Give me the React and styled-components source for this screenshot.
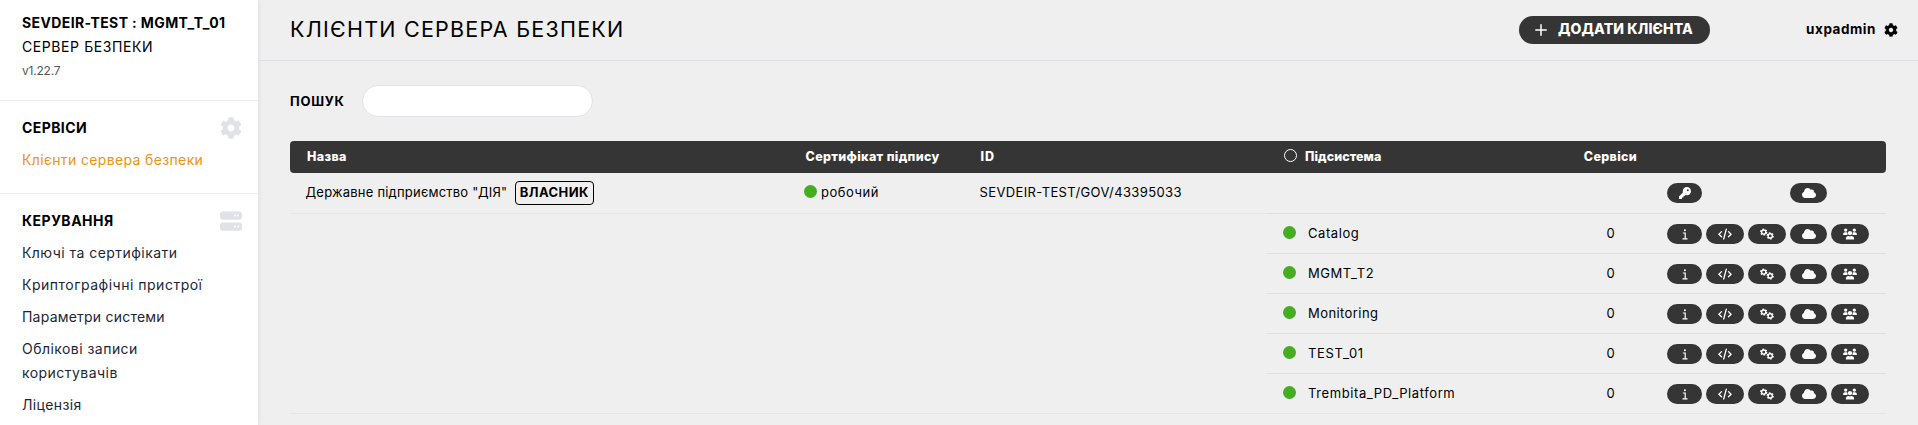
import React from 'react';
import styled, { createGlobalStyle } from 'styled-components';
import { FaCog } from 'react-icons/fa';
import { FaCloud, FaKey, FaServer } from 'react-icons/fa6';

const GlobalStyle = createGlobalStyle`
  * { box-sizing: border-box; }
  body {
    margin: 0;
    overflow: hidden;
    background: #efefef;
    color: #000;
    font-family: Inter, "Noto Sans", sans-serif;
  }
`;

const Page = styled.div`
  display: flex;
  height: 425px;
`;

const Label = styled.span`
  letter-spacing: ${(p) => p.$track || 0}px;
  white-space: nowrap;
`;

/* Sidebar */

const Sidebar = styled.aside`
  flex: none;
  width: 258px;
  background: #fff;
  box-shadow: 0 0 5px rgba(0, 0, 0, 0.1);
  overflow: hidden;
`;

const ServerInfo = styled.div`
  height: 101px;
  padding: 11px 0 0 22px;
  border-bottom: 1px solid #eeeff4;
  font-size: 14px;
  line-height: 24px;
`;

const ServerLine = styled.div`
  font-weight: ${(p) => (p.$bold ? 700 : 400)};
`;

const Version = styled.div`
  font-size: 12px;
  color: #555;
`;

const NavSection = styled.section`
  padding: 15px 16px 21px 22px;
  border-bottom: 1px solid #eeeff4;
`;

const NavHeading = styled.div`
  display: flex;
  align-items: center;
  justify-content: space-between;
  height: 24px;
  font-size: 14px;
  font-weight: 700;
  line-height: 24px;
  svg { color: #e1e2e8; }
`;

const NavItem = styled.div`
  margin-top: 8px;
  font-size: 14px;
  line-height: 24px;
  color: ${(p) => (p.$active ? '#f0930f' : '#1d2636')};
`;

/* Main area */

const Main = styled.main`
  flex: 1;
  min-width: 0;
`;

const TopBar = styled.header`
  display: flex;
  align-items: center;
  height: 61px;
  padding: 0 20px 0 32px;
  border-bottom: 1px solid #dddfe4;
`;

const Title = styled.h1`
  flex: 1;
  margin: 0 0 2px;
  font-size: 21.5px;
  font-weight: 400;
  line-height: 28px;
`;

const AddButton = styled.button`
  display: flex;
  align-items: center;
  gap: 11px;
  width: 191px;
  height: 28px;
  margin-right: 96px;
  padding: 0 0 0 16px;
  border: 0;
  border-radius: 14px;
  background: #353535;
  color: #fff;
  font: 800 14px/26px Inter, sans-serif;
  span { padding-bottom: 2px; }
`;

const User = styled.div`
  display: flex;
  align-items: center;
  gap: 8px;
  font-size: 13.5px;
  font-weight: 700;
  span { padding-bottom: 2px; }
`;

const Content = styled.div`
  padding: 24px 32px 0;
`;

const Search = styled.label`
  display: flex;
  align-items: center;
  gap: 17px;
  font-size: 13px;
  font-weight: 700;
  span { padding-bottom: 1px; }
`;

const SearchInput = styled.input`
  width: 231px;
  height: 32px;
  border: 1px solid #e1e2e8;
  border-radius: 16px;
  background: #fff;
`;

const Table = styled.div`
  width: 1596px;
  margin-top: 24px;
  font-size: 13px;
  border-bottom: 1px solid #e5e5e6;
`;

const Row = styled.div`
  display: grid;
  grid-template-columns: 499px 175px 303px 287px 113px 219px;
  align-items: center;
  height: 40px;
`;

const HeadRow = styled(Row)`
  height: 32px;
  padding-bottom: 1px;
  border-radius: 4px;
  background: #353535;
  color: #fff;
  font-size: 12.5px;
  font-weight: 800;
`;

const SubRow = styled.div`
  display: grid;
  grid-template-columns: 287px 113px 219px;
  align-items: center;
  height: 40px;
  border-top: 1px solid #e0e0e2;
`;

const SubList = styled.div`
  display: flex;
  flex-direction: column;
  width: 619px;
  margin-left: auto;
`;

const GroupRows = styled.div`
  display: flex;
`;

const Spacer = styled.div`
  flex: 1;
  border-top: 1px solid #e6e6e7;
`;

const Cell = styled.div`
  display: flex;
  align-items: center;
  gap: ${(p) => p.$gap || 0}px;
  padding-left: ${(p) => p.$inset || 0}px;
  padding-bottom: ${(p) => p.$lift || 0}px;
`;

const CountCell = styled.div`
  text-align: center;
  padding-bottom: ${(p) => p.$lift || 0}px;
`;

const ClientName = styled(Label)`
  padding-bottom: 3px;
`;

const OwnerBadge = styled.span`
  display: inline-flex;
  align-items: center;
  justify-content: center;
  width: 79px;
  height: 24px;
  padding-bottom: 2px;
  border: 1px solid #000;
  border-radius: 4px;
  font-weight: 700;
`;

const Status = styled.i`
  flex: none;
  width: 13px;
  height: 13px;
  border-radius: 50%;
  background: ${(p) => (p.$hollow ? 'transparent' : '#45ad20')};
  border: ${(p) => (p.$hollow ? '1px solid #fff' : '0')};
  margin-bottom: ${(p) => p.$raise || 0}px;
`;

const Actions = styled.div`
  display: grid;
  grid-template-columns: 35px 38px 38px 37px 38px;
  column-gap: 4px;
`;

const Pill = styled.button`
  grid-column: ${(p) => p.$col};
  display: flex;
  align-items: center;
  justify-content: center;
  height: 20px;
  padding: 0;
  border: 0;
  border-radius: 10px;
  background: #353535;
  color: #fff;
`;

/* Icons */

const PlusIcon = () => (
  <svg width="12" height="12" viewBox="0 0 12 12" stroke="currentColor" strokeWidth="1.5" strokeLinecap="round">
    <path d="M6 .8v10.400M.8 6h10.400" />
  </svg>
);

const InfoIcon = () => (
  <svg width="6" height="12" viewBox="0 0 6 12" fill="none" stroke="currentColor" strokeWidth="1.2">
    <circle cx="2.9" cy="2.2" r=".95" fill="currentColor" stroke="none" />
    <path d="M.9 5h2.300v5.800M.5 10.900h5" />
  </svg>
);

const CodeIcon = () => (
  <svg width="14" height="12" viewBox="0 0 14 12" fill="none" stroke="currentColor" strokeWidth="1.3" strokeLinecap="round">
    <path d="M3.500 3.600.9 6.200l2.600 2.600M10.500 3.600l2.600 2.600-2.600 2.600M8.300 1.200 5.700 11" />
  </svg>
);

const Gear = ({ cx, cy }) => (
  <g>
    <circle cx={cx} cy={cy} r="2.1" strokeWidth="1.4" />
    <circle cx={cx} cy={cy} r="3" strokeWidth="1.3" strokeDasharray="1.57 1.57" />
  </g>
);

const GearsIcon = () => (
  <svg width="14" height="12" viewBox="0 0 14 12" fill="none" stroke="currentColor">
    <Gear cx={3.7} cy={4.1} />
    <Gear cx={10.2} cy={7.9} />
  </svg>
);

const GroupIcon = () => (
  <svg width="14" height="12" viewBox="0 0 14 12" fill="currentColor">
    <circle cx="2.7" cy="2.1" r="1.7" />
    <circle cx="11.3" cy="2.1" r="1.7" />
    <circle cx="7" cy="5.2" r="2.1" />
    <path d="M.2 7V6c0-1 .8-1.700 1.800-1.700h1.600c.4 0 .6.100.8.300-.2.900-.1 1.700.2 2.400zM13.800 7V6c0-1-.8-1.700-1.800-1.700h-1.600c-.4 0-.6.100-.8.300.2.900.1 1.700-.2 2.400z" />
    <path d="M2.900 11.600v-1c0-1.500 1-2.600 2.500-2.600.5.300 1 .4 1.600.4s1.100-.1 1.600-.4c1.500 0 2.500 1.100 2.500 2.600v1z" />
  </svg>
);

const management = [
  ['Ключі та сертифікати', 0.45],
  ['Криптографічні пристрої', 0.5],
  ['Параметри системи', 0.22],
  ['Ліцензія', 0.35],
];

const subsystems = [
  ['Catalog', 0.57],
  ['MGMT_T2', 0.55],
  ['Monitoring', 0.42],
  ['TEST_01', 0.68],
  ['Trembita_PD_Platform', 0.6],
];

function MenuItem({ item }) {
  return (
    <NavItem>
      <Label $track={item[1]}>{item[0]}</Label>
    </NavItem>
  );
}

function Subsystem({ name, track }) {
  return (
    <SubRow>
      <Cell $inset={16} $gap={12} $lift={2}>
        <Status $raise={1} />
        <Label $track={track}>{name}</Label>
      </Cell>
      <CountCell $lift={2}>0</CountCell>
      <Actions>
        <Pill $col={1}><InfoIcon /></Pill>
        <Pill $col={2}><CodeIcon /></Pill>
        <Pill $col={3}><GearsIcon /></Pill>
        <Pill $col={4}><FaCloud size={14} /></Pill>
        <Pill $col={5}><GroupIcon /></Pill>
      </Actions>
    </SubRow>
  );
}

export default function App() {
  return (
    <Page>
      <GlobalStyle />
      <Sidebar>
        <ServerInfo>
          <ServerLine $bold><Label $track={0.39}>SEVDEIR-TEST : MGMT_T_01</Label></ServerLine>
          <ServerLine><Label $track={0.587}>СЕРВЕР БЕЗПЕКИ</Label></ServerLine>
          <Version><Label $track={-0.2}>v1.22.7</Label></Version>
        </ServerInfo>
        <NavSection>
          <NavHeading>
            <Label $track={0.42}>СЕРВІСИ</Label>
            <FaCog size={22} />
          </NavHeading>
          <NavItem $active><Label $track={0.36}>Клієнти сервера безпеки</Label></NavItem>
        </NavSection>
        <NavSection>
          <NavHeading>
            <Label $track={0.5}>КЕРУВАННЯ</Label>
            <FaServer size={22} />
          </NavHeading>
          {management.slice(0, 3).map((m) => <MenuItem key={m[0]} item={m} />)}
          <NavItem>
            <Label $track={0.46}>Облікові записи<br />користувачів</Label>
          </NavItem>
          <MenuItem item={management[3]} />
        </NavSection>
      </Sidebar>
      <Main>
        <TopBar>
          <Title><Label $track={1.23}>КЛІЄНТИ СЕРВЕРА БЕЗПЕКИ</Label></Title>
          <AddButton>
            <PlusIcon />
            <Label $track={0.12}>ДОДАТИ КЛІЄНТА</Label>
          </AddButton>
          <User>
            <Label $track={0.54}>uxpadmin</Label>
            <FaCog size={14} />
          </User>
        </TopBar>
        <Content>
          <Search>
            <Label $track={0.72}>ПОШУК</Label>
            <SearchInput />
          </Search>
          <Table>
            <HeadRow>
              <Cell $inset={17}><Label $track={0.35}>Назва</Label></Cell>
              <Cell $inset={16.5}><Label $track={0.336}>Сертифікат підпису</Label></Cell>
              <Cell $inset={16.5}><Label $track={1}>ID</Label></Cell>
              <Cell $inset={17} $gap={8}>
                <Status $hollow $raise={2} />
                <Label $track={0.07}>Підсистема</Label>
              </Cell>
              <CountCell><Label $track={0.33}>Сервіси</Label></CountCell>
            </HeadRow>
            <Row>
              <Cell $inset={15.5} $gap={7.5}>
                <ClientName $track={0.21}>Державне підприємство "ДІЯ"</ClientName>
                <OwnerBadge><Label $track={0.4}>ВЛАСНИК</Label></OwnerBadge>
              </Cell>
              <Cell $inset={15} $gap={4} $lift={3}>
                <Status />
                <Label $track={0.52}>робочий</Label>
              </Cell>
              <Cell $inset={15.5} $lift={3}><Label $track={0.37}>SEVDEIR-TEST/GOV/43395033</Label></Cell>
              <span />
              <span />
              <Actions>
                <Pill $col={1}><FaKey size={12} /></Pill>
                <Pill $col={4}><FaCloud size={14} /></Pill>
              </Actions>
            </Row>
            <GroupRows>
              <Spacer />
              <SubList>
                {subsystems.map(([name, track]) => <Subsystem key={name} name={name} track={track} />)}
              </SubList>
            </GroupRows>
          </Table>
        </Content>
      </Main>
    </Page>
  );
}
